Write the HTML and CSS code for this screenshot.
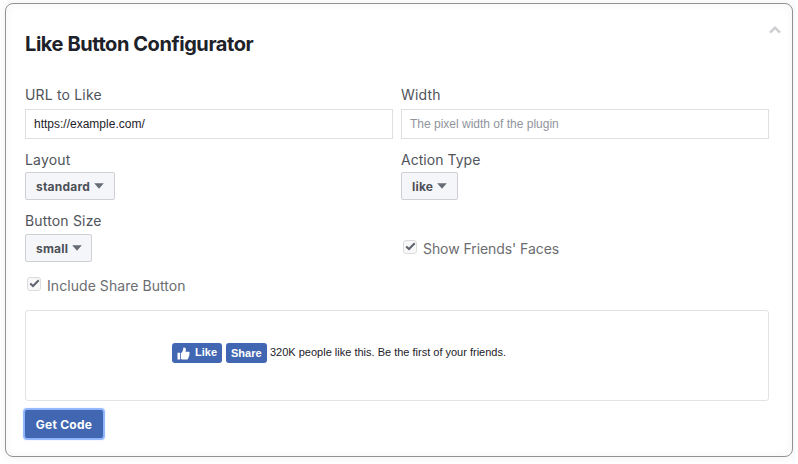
FILE: index.html
```
<!DOCTYPE html>
<html lang="en">
<head>
<meta charset="utf-8">
<title>Like Button Configurator</title>
<link rel="stylesheet" href="styles.css">
</head>
<body>
<main class="card">
  <header class="head">
    <h1>Like Button Configurator</h1>
    <svg class="chevron" width="14" height="10" viewBox="0 0 14 10"><path d="M2 7.7 7 2.7l5 5" fill="none" stroke="#ccced2" stroke-width="2.5"/></svg>
  </header>
  <div class="grid">
    <div class="field">
      <label for="url">URL to Like</label>
      <input id="url" type="text" value="https://example.com/">
    </div>
    <div class="field">
      <label for="width">Width</label>
      <input id="width" type="text" placeholder="The pixel width of the plugin">
    </div>
    <div class="field">
      <span class="label low">Layout</span>
      <button class="select standard"><span>standard</span><svg class="caret" width="10" height="6" viewBox="0 0 10 6"><path d="M.2.3h9.6L5 5.8z" fill="#666b75"/></svg></button>
    </div>
    <div class="field">
      <span class="label low action">Action Type</span>
      <button class="select like"><span>like</span><svg class="caret" width="10" height="6" viewBox="0 0 10 6"><path d="M.2.3h9.6L5 5.8z" fill="#666b75"/></svg></button>
    </div>
    <div class="field">
      <span class="label">Button Size</span>
      <button class="select small"><span>small</span><svg class="caret" width="10" height="6" viewBox="0 0 10 6"><path d="M.2.3h9.6L5 5.8z" fill="#666b75"/></svg></button>
    </div>
    <div class="check faces">
      <span class="box"><svg width="11" height="9" viewBox="0 0 11 9"><path d="M1.2 4.4 4 7 9.7 1.3" fill="none" stroke="#5e636e" stroke-width="2"/></svg></span>
      <span class="faces-text">Show Friends' Faces</span>
    </div>
  </div>
  <div class="check share-check">
    <span class="box"><svg width="11" height="9" viewBox="0 0 11 9"><path d="M1.2 4.4 4 7 9.7 1.3" fill="none" stroke="#5e636e" stroke-width="2"/></svg></span>
    <span class="include-text">Include Share Button</span>
  </div>
  <section class="preview">
    <button class="fb fb-like"><svg width="13" height="13" viewBox="0 0 13 13" fill="#fff"><path d="M.5 5.8h2.7v6.7H.5zM4 6.2C5.5 5 6.2 3.6 6.2 1.6c0-.7.4-1.2 1-1.2 1 0 1.7.9 1.7 2.2 0 .8-.2 1.5-.5 2.2h3c.8 0 1.3.5 1.3 1.2 0 .5-.3.9-.7 1.1.3.2.5.5.5.9 0 .6-.4 1-.9 1.1.2.2.3.5.3.8 0 .5-.4 1-.9 1.1.1.2.1.3.1.5 0 .7-.5 1.1-1.3 1.1H7c-1.3 0-2.2-.3-3-.7z"/></svg><span class="like-text">Like</span></button>
    <button class="fb fb-share">Share</button>
    <span class="count">320K people like this. Be the first of your friends.</span>
  </section>
  <button class="get">Get Code</button>
</main>
</body>
</html>
```
FILE: styles.css
```
* { box-sizing: border-box; }
body {
  margin: 0;
  padding: 3px 5px 7px;
  height: 464px;
  overflow: hidden;
  background: #fff;
  font-family: Inter, "Liberation Sans", sans-serif;
  color: #50545b;
}
button { font-family: inherit; margin: 0; white-space: nowrap; }
.card {
  height: 454px;
  padding: 0 23px 0 19px;
  border: 1px solid #929292;
  border-radius: 8px;
  background: #fff;
  box-shadow: 0 0 6px 3px #f7f7f7, inset 0 0 6px 3px #f9f9f9;
}
.head {
  display: flex;
  justify-content: space-between;
  height: 80px;
}
h1 {
  margin: 27px 0 0;
  font-size: 20px;
  line-height: 26px;
  font-weight: 700;
  letter-spacing: -0.43px;
  color: #1d2129;
}
.chevron { margin: 21px -13px 0 0; }
.grid {
  display: grid;
  grid-template-columns: 368px 368px;
  grid-template-rows: 64px 62px 62px;
  column-gap: 8px;
}
.field { display: flex; flex-direction: column; align-items: flex-start; }
label, .label {
  height: 25px;
  font-size: 14px;
  line-height: 22px;
  letter-spacing: .17px;
  white-space: nowrap;
}
.label { height: 24px; }
.low { line-height: 24px; }
.action { letter-spacing: .04px; }
input {
  width: 368px;
  height: 30px;
  padding: 0 8px;
  border: 1px solid #dddfe2;
  border-radius: 0;
  background: #fff;
  font: 12px "Liberation Sans", sans-serif;
  color: #1d2129;
}
input::placeholder { color: #90949c; opacity: 1; }
.select {
  display: flex;
  align-items: center;
  gap: 4px;
  height: 28px;
  padding: 0 10px;
  border: 1px solid #ced0d4;
  border-radius: 2px;
  background: #f5f6f9;
  color: #4b4f56;
  font-size: 12px;
  font-weight: 700;
  letter-spacing: .22px;
}
.standard { width: 90px; }
.like { width: 57px; }
.small { width: 67px; }
.caret { flex: none; }
.check {
  display: flex;
  align-items: center;
  gap: 6px;
  height: 22px;
  font-size: 14px;
  color: #6b6d70;
}
.faces { margin: 27px 0 0 2px; }
.faces-text { letter-spacing: -.07px; }
.share-check { margin: 2px 0 0 2px; }
.include-text { letter-spacing: .06px; }
.box {
  display: flex;
  align-items: center;
  justify-content: center;
  width: 14px;
  height: 14px;
  margin-bottom: 3px;
  border: 1px solid #dcdcde;
  border-radius: 3px;
  background: #f8f8f8;
}
.preview {
  display: flex;
  align-items: flex-start;
  width: 744px;
  height: 91px;
  margin-top: 14px;
  padding: 32px 0 0 146px;
  border: 1px solid #e2e3e5;
  border-radius: 3px;
}
.fb {
  display: flex;
  align-items: center;
  height: 20px;
  padding: 0 5px;
  border: 0;
  border-radius: 3px;
  background: #4267b2;
  color: #fff;
  font: bold 11px "Liberation Sans", sans-serif;
}
.fb-like { width: 50px; gap: 5px; margin-right: 4px; }
.like-text { padding-bottom: 2px; }
.fb-share { width: 41px; margin-right: 3px; }
.count {
  font: 11px/18px "Liberation Sans", sans-serif;
  color: #1d2129;
}
.get {
  display: block;
  width: 78px;
  height: 28px;
  margin-top: 9px;
  padding: 0;
  border: 1px solid #4267b2;
  border-radius: 2px;
  background: #4267b2;
  box-shadow: 0 0 1px 2px #8cb4fa;
  color: #fff;
  font-size: 12px;
  font-weight: 700;
  letter-spacing: .25px;
}
```
